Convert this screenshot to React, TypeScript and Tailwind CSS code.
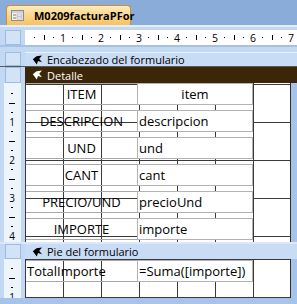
const rows: [string, string, boolean][] = [
  ["ITEM", "item", true],
  ["DESCRIPCION", "descripcion", false],
  ["UND", "und", false],
  ["CANT", "cant", false],
  ["PRECIO/UND", "precioUnd", false],
  ["IMPORTE", "importe", false],
];

function SectionIcon({ color }: { color: string }) {
  return (
    <svg width="11" height="10" viewBox="0 0 11 10" className="shrink-0">
      <path d="M10 0.5 L4.5 1.2 L0.8 4.2 L4.8 9.5 L6 6 L10 7.2 L7.2 3.8 Z" fill={color} />
    </svg>
  );
}

function FormIcon() {
  return (
    <svg width="13" height="11" viewBox="0 0 13 11" className="shrink-0">
      <rect x="0.5" y="0.5" width="12" height="10" fill="#f4f4f4" stroke="#8d8d8d" />
      <rect x="1" y="1" width="11" height="2" fill="#c9d3df" />
      <rect x="2" y="4.5" width="3" height="1" fill="#7a7a7a" />
      <rect x="6" y="4" width="5" height="2" fill="#fff" stroke="#9a9a9a" strokeWidth="0.6" />
      <rect x="2" y="7.5" width="3" height="1" fill="#7a7a7a" />
      <rect x="6" y="7" width="5" height="2" fill="#fff" stroke="#9a9a9a" strokeWidth="0.6" />
    </svg>
  );
}

function TopRuler() {
  const units = [0, 1, 2, 3, 4, 5, 6];
  return (
    <svg width="272" height="15" className="block">
      {units.map((k) => (
        <g key={k} fill="#000">
          <rect x={38 * k + 9} y="7" width="1" height="1" />
          <rect x={38 * k + 19} y="5" width="1" height="5" />
          <rect x={38 * k + 28} y="7" width="1" height="1" />
          <text x={38 * (k + 1)} y="11.5" fontSize="10.5" textAnchor="middle" fontFamily="Open Sans, sans-serif">
            {k + 1}
          </text>
        </g>
      ))}
    </svg>
  );
}

function SideRuler({ height, units, offset }: { height: number; units: number; offset: number }) {
  const list = Array.from({ length: units }, (_, i) => i);
  return (
    <svg width="16" height={height} className="block overflow-visible">
      {list.map((k) => {
        const y0 = offset + 38 * k;
        return (
          <g key={k} fill="#000">
            <rect x="7" y={y0 + 9} width="2" height="1" />
            <rect x="5" y={y0 + 19} width="6" height="1" />
            <rect x="7" y={y0 + 28} width="2" height="1" />
            <text x="8" y={y0 + 42} fontSize="10" textAnchor="middle" fontFamily="Open Sans, sans-serif">
              {k + 1}
            </text>
          </g>
        );
      })}
    </svg>
  );
}

function SideBox() {
  return <div className="h-full w-[16px] border border-[#9fbbe0] bg-[#d3e3f7]" />;
}

export default function App() {
  return (
    <div className="flex h-[304px] w-[297px] flex-col overflow-hidden bg-[#c2d8f3] font-['Open_Sans',sans-serif] text-black">
      {/* tab strip */}
      <div className="flex h-[25px] items-end bg-[#8aacd9] pl-[6px]">
        <div className="flex h-[20px] w-[125px] items-center gap-[10px] rounded-t-[4px] border border-b-0 border-[#c8913f] bg-gradient-to-b from-[#fdebb8] to-[#f6c25c] pl-[4px]">
          <FormIcon />
          <span className="text-[11px] font-bold leading-none">M0209facturaPFor</span>
        </div>
      </div>
      <div className="h-[5px] border-t-2 border-[#e4eefb] bg-[#c2d8f3]" />

      {/* ruler row */}
      <div className="flex h-[15px]">
        <div className="w-[25px] shrink-0 pl-[5px]">
          <SideBox />
        </div>
        <div className="flex-1 bg-white">
          <TopRuler />
        </div>
      </div>
      <div className="h-[7px] border-t-2 border-[#a5c1e6]" />

      {/* Encabezado header */}
      <div className="flex h-[14px]">
        <div className="w-[25px] shrink-0 pl-[5px]">
          <SideBox />
        </div>
        <div className="flex flex-1 items-center gap-[4px] border-t border-[#e8f1fc] bg-[#c9dcf5] pl-[7px] text-[11px] leading-none">
          <SectionIcon color="#000" />
          <span>Encabezado del formulario</span>
        </div>
      </div>
      <div className="h-px bg-[#5a5a5a]" />

      {/* Detalle header */}
      <div className="flex h-[16px]">
        <div className="w-[25px] shrink-0 pl-[5px]">
          <SideBox />
        </div>
        <div className="flex flex-1 items-center gap-[4px] bg-[#3d2607] pl-[7px] text-[11px] leading-none text-white">
          <SectionIcon color="#fff" />
          <span>Detalle</span>
        </div>
      </div>

      {/* Detail body */}
      <div className="flex h-[159px]">
        <div className="w-[25px] shrink-0 pl-[4px] pr-[4px]">
          <div className="h-full bg-[#eef4fc]">
            <SideRuler height={159} units={4} offset={1} />
          </div>
        </div>
        <div className="flex w-[266px] flex-col gap-[5px] border-r border-[#2e2e2e] bg-white bg-[linear-gradient(to_right,#3a3a3a_1px,transparent_1px),linear-gradient(to_bottom,#3a3a3a_1px,transparent_1px)] bg-[size:38px_38px] bg-[position:0_1px] text-[13px] leading-none">
          {rows.map(([label, field, centered]) => (
            <div key={label} className="flex h-[22px] shrink-0 pl-[1px]">
              <div className="flex w-[111px] items-center justify-center border-y border-[#a9a9a9]">{label}</div>
              <div
                className={
                  centered
                    ? "flex w-[116px] items-center justify-center border border-[#b3b3b3] bg-white"
                    : "flex w-[116px] items-center border border-[#b3b3b3] bg-white pl-[1px]"
                }
              >
                {field}
              </div>
            </div>
          ))}
        </div>
        <div className="flex-1 bg-[#a7c3e9]" />
      </div>
      <div className="h-[2px] bg-[#dce8f8]" />

      {/* Pie header */}
      <div className="flex h-[15px]">
        <div className="w-[25px] shrink-0 pl-[5px]">
          <SideBox />
        </div>
        <div className="flex flex-1 items-center gap-[4px] bg-[#c9dcf5] pl-[7px] text-[11px] leading-none">
          <SectionIcon color="#000" />
          <span>Pie del formulario</span>
        </div>
      </div>

      {/* Footer body */}
      <div className="flex h-[39px]">
        <div className="w-[25px] shrink-0 pl-[4px] pr-[4px]">
          <div className="h-full bg-[#eef4fc]">
            <SideRuler height={39} units={1} offset={0} />
          </div>
        </div>
        <div className="flex w-[266px] flex-col border-r border-[#2e2e2e] bg-white bg-[linear-gradient(to_right,#3a3a3a_1px,transparent_1px),linear-gradient(to_bottom,#3a3a3a_1px,transparent_1px)] bg-[size:38px_38px] pt-[1px] text-[13px] leading-none">
          <div className="flex h-[22px] shrink-0 pl-[1px]">
            <div className="flex w-[111px] items-center border-y border-[#a9a9a9] pl-[1px]">TotalImporte</div>
            <div className="flex w-[116px] items-center border border-[#b3b3b3] bg-white pl-[1px]">=Suma([importe])</div>
          </div>
        </div>
        <div className="flex-1 bg-[#a7c3e9]" />
      </div>
      <div className="flex-1 bg-[#a7c3e9]" />
    </div>
  );
}
